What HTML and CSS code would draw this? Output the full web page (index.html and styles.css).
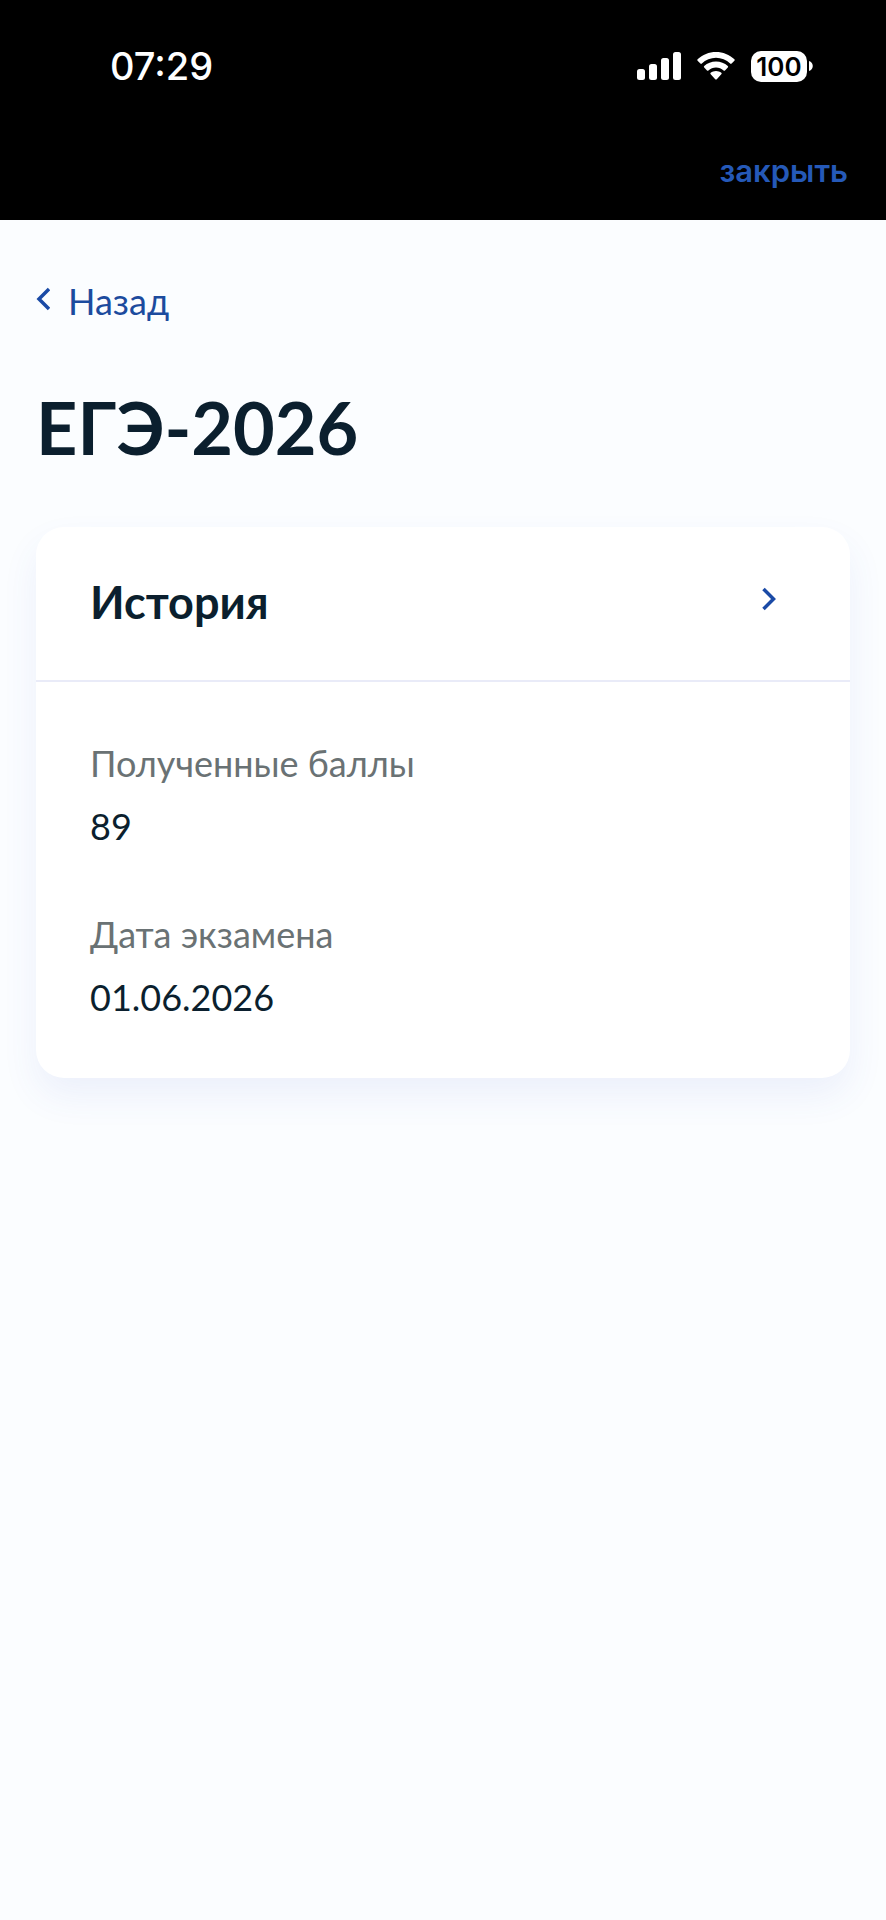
FILE: index.html
```html
<!DOCTYPE html>
<html lang="ru">
<head>
<meta charset="utf-8">
<meta name="viewport" content="width=device-width, initial-scale=1">
<title>ЕГЭ-2026</title>
<link rel="stylesheet" href="styles.css">
</head>
<body>
<header class="topbar">
  <div class="status">
    <time class="clock">07:29</time>
    <div class="indicators">
      <svg class="signal" width="44" height="30" viewBox="0 0 44 30" aria-hidden="true">
        <rect x="0" y="18" width="8" height="11" rx="2.5"/>
        <rect x="12" y="13" width="8" height="16" rx="2.5"/>
        <rect x="24" y="7" width="8" height="22" rx="2.5"/>
        <rect x="36" y="1" width="8" height="28" rx="2.5"/>
      </svg>
      <svg class="wifi" width="38" height="30" viewBox="0 0 38 30" aria-hidden="true">
        <path d="M.6 8.300C5.500 3.600 12 1 19 1s13.500 2.600 18.400 7.300c.5.5.5 1 0 1.500l-2.800 2.800c-.4.4-1 .4-1.400 0C29.300 8.900 24.300 6.800 19 6.800S8.700 8.900 4.800 12.600c-.4.4-1 .4-1.400 0L.6 9.800c-.5-.5-.5-1 0-1.500z"/>
        <path d="M7.200 15.100C10.400 12.100 14.500 10.500 19 10.500s8.600 1.600 11.800 4.600c.5.500.5 1 0 1.500L28 19.400c-.4.4-1 .4-1.400 0-2.100-1.900-4.700-3-7.600-3s-5.500 1.100-7.600 3c-.4.4-1 .4-1.400 0l-2.800-2.800c-.5-.5-.5-1 0-1.500z"/>
        <path d="M13.700 21.800c1.500-1.200 3.300-1.900 5.300-1.900s3.800.7 5.300 1.900c.5.4.5 1 0 1.500l-4.500 4.900c-.5.5-1.100.5-1.600 0l-4.500-4.900c-.5-.5-.5-1.100 0-1.500z"/>
      </svg>
      <div class="battery">
        <span class="battery-level">100</span>
        <svg width="4" height="10" viewBox="0 0 4 10" aria-hidden="true"><path d="M0 0c5 1.500 5 8.500 0 10z"/></svg>
      </div>
    </div>
  </div>
  <button class="close" type="button">закрыть</button>
</header>
<main class="page">
  <a class="back" href="#">
    <svg class="chevron" width="14" height="24" viewBox="0 0 14 24" aria-hidden="true"><path d="M13 2 3 12l10 10"/></svg>
    <span>Назад</span>
  </a>
  <h1 class="title">ЕГЭ-2026</h1>
  <section class="card">
    <a class="card-header" href="#">
      <h2 class="subject">История</h2>
      <svg class="chevron" width="14" height="24" viewBox="0 0 14 24" aria-hidden="true"><path d="M1.500 2 11.500 12l-10 10"/></svg>
    </a>
    <dl class="fields">
      <div class="field">
        <dt>Полученные баллы</dt>
        <dd>89</dd>
      </div>
      <div class="field">
        <dt>Дата экзамена</dt>
        <dd>01.06.2026</dd>
      </div>
    </dl>
  </section>
</main>
</body>
</html>
```
FILE: styles.css
```css
* {
  box-sizing: border-box;
}

body {
  margin: 0;
  min-height: 100vh;
  background: #fbfdff;
  color: #0b1f2e;
  font-family: Lato, "Open Sans", sans-serif;
  font-size: 36px;
  line-height: 54px;
}

.topbar {
  display: flex;
  flex-direction: column;
  gap: 60px;
  padding: 46px 38px 24px 110px;
  background: #000;
  font-family: Inter, sans-serif;
}

.status {
  display: flex;
  align-items: center;
  justify-content: space-between;
  padding-right: 35px;
  line-height: 40px;
}

.clock {
  color: #fff;
  font-size: 38px;
  font-weight: 500;
}

.indicators {
  display: flex;
  align-items: center;
  gap: 16px;
  fill: #fff;
}

.battery {
  display: flex;
  align-items: center;
  gap: 2px;
}

.battery-level {
  width: 56px;
  border-radius: 10px;
  background: #fff;
  color: #000;
  font-size: 26px;
  font-weight: 600;
  line-height: 31px;
  text-align: center;
}

.close {
  align-self: flex-end;
  padding: 0;
  border: 0;
  background: none;
  color: #2559b8;
  font: 600 31px/50px Inter, sans-serif;
}

.page {
  padding: 54px 36px;
}

.back {
  display: flex;
  align-items: center;
  gap: 18px;
  width: fit-content;
  color: #1c4b9e;
  text-decoration: none;
}

.back .chevron {
  margin-bottom: 4px;
}

.chevron {
  fill: none;
  stroke: #1a4aa6;
  stroke-width: 3.5;
}

.title {
  margin: 55px 0 56px;
  font-size: 72px;
  font-weight: 700;
  line-height: 88px;
}

.card {
  border-radius: 28px;
  background: #fff;
  box-shadow: 0 18px 36px rgba(60, 90, 200, 0.08);
}

.card-header {
  display: flex;
  align-items: center;
  justify-content: space-between;
  padding: 48px 74px 51px 54px;
  border-bottom: 2px solid #e9ebf8;
  color: inherit;
  text-decoration: none;
}

.card-header .chevron {
  margin-bottom: 6px;
}

.subject {
  margin: 0;
  font-size: 45px;
  font-weight: 700;
}

.fields {
  display: grid;
  gap: 54px;
  margin: 0;
  padding: 54px;
}

.field {
  display: grid;
  gap: 9px;
}

.field dt {
  color: #6a7274;
}

.field dd {
  margin: 0;
}
```
